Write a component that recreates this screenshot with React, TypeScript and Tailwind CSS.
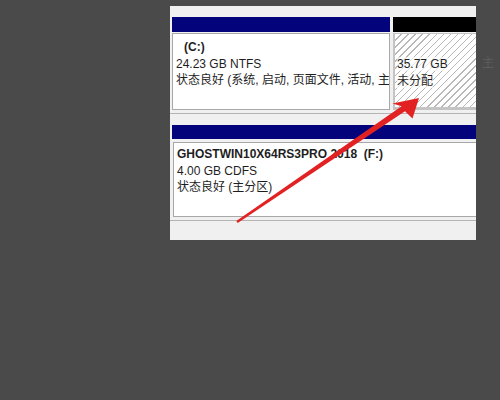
import React from "react";

export default function App() {
  const font = { fontFamily: '"Liberation Sans","Noto Sans CJK SC",sans-serif' };
  return (
    <div className="relative w-[500px] h-[400px] overflow-hidden bg-[#4a4a4a]" style={font}>
      <div className="pl-[170px] pt-[6px] flex">
        <div className="w-[306px] h-[234px] bg-[#f0f0f0] flex flex-col pt-[11px] pl-[2px]">
          {/* row 1 */}
          <div className="flex">
            <div className="w-[218px] flex flex-col">
              <div className="h-[15px] bg-[#03037c]" />
              <div className="mt-[1px] h-[77px] border border-[#a8a8a8] bg-white pl-[3px] pt-[5px] text-[12px] leading-[16.5px] text-[#1e1e1e]">
                <div className="pl-[8px] font-bold">(C:)</div>
                <div>24.23 GB NTFS</div>
                <div className="whitespace-nowrap overflow-hidden">状态良好 (系统, 启动, 页面文件, 活动, 主</div>
              </div>
            </div>
            <div className="ml-[3px] flex-1 flex flex-col">
              <div className="h-[15px] bg-black" />
              <div className="mt-[1px] h-[77px] border-l-[2px] border-b-[3px] border-t border-[#c4c4c4] bg-[repeating-linear-gradient(135deg,#ffffff_0px,#ffffff_4px,#b8b8b8_4px,#b8b8b8_5px)] pl-[2px] pt-[22px] text-[12px] leading-[16.5px] text-[#1e1e1e]">
                <div><span className="bg-white/60">35.77 GB</span></div>
                <div><span className="bg-white/60">未分配</span></div>
              </div>
            </div>
          </div>
          <div className="mt-[3px] h-px bg-[#b4b4b4] -ml-[2px]" />
          <div className="h-[11px]" />
          {/* row 2 */}
          <div className="h-[14px] bg-[#03037c]" />
          <div className="mt-[3px] ml-[1px] h-[75px] border-l border-t border-b border-[#a8a8a8] bg-white pl-[3px] pt-[3px] text-[12px] leading-[16.5px] text-[#1e1e1e]">
            <div className="font-bold whitespace-nowrap">GHOSTWIN10X64RS3PRO 2018 &nbsp;(F:)</div>
            <div>4.00 GB CDFS</div>
            <div>状态良好 (主分区)</div>
          </div>
          <div className="mt-[3px] h-px bg-[#b4b4b4] -ml-[2px]" />
        </div>
        <div className="flex-1 pt-[48px] pl-[6px] text-[12px] text-[#5c5c5c]">主</div>
      </div>
      <svg className="absolute left-0 top-0" width="500" height="400" viewBox="0 0 500 400">
        <polygon
          points="236.3,220.9 401.6,106.2 392.5,103.5 419,98 412.5,118.5 405,111.2 237.7,223.1"
          fill="#e22222"
        />
      </svg>
    </div>
  );
}
